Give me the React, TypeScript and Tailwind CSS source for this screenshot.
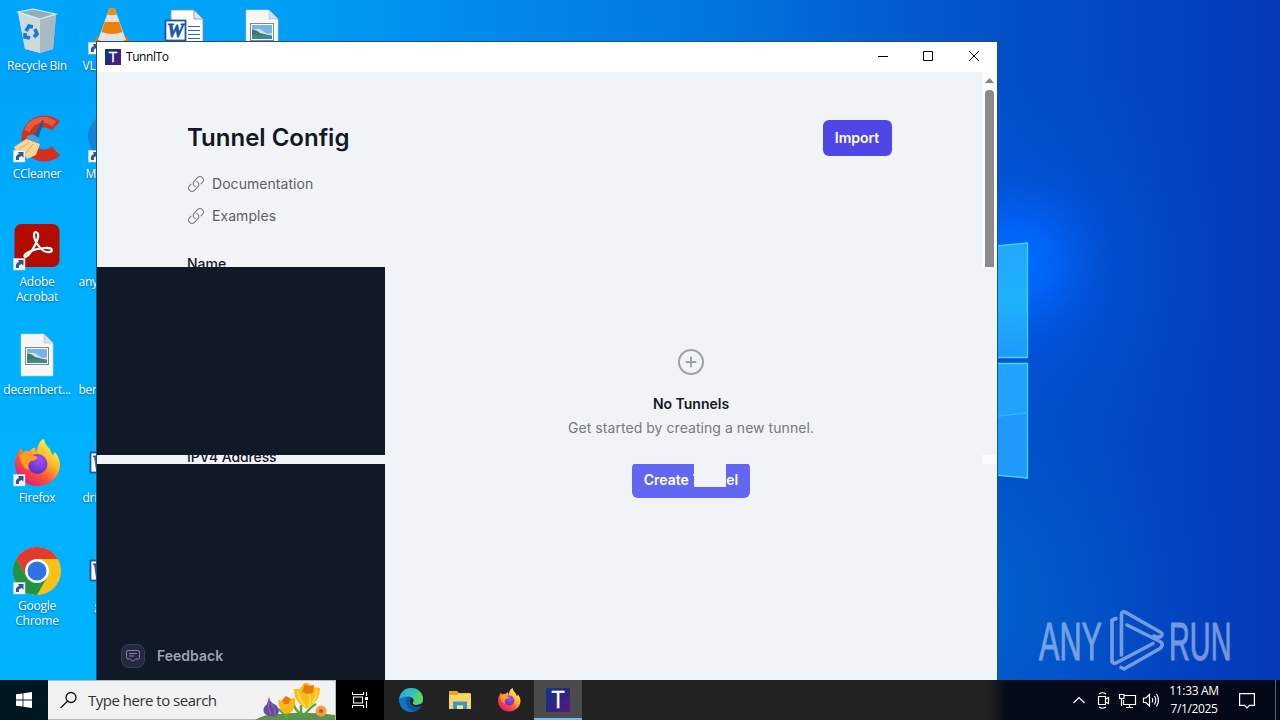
import type { ReactNode } from 'react'

const SEGOE = "font-['Open_Sans',sans-serif]"

/* ---------- desktop artwork ---------- */

function Wallpaper() {
  return (
    <svg className="absolute inset-0 h-full w-full" viewBox="0 0 1280 720" aria-hidden="true">
      <defs>
        <linearGradient id="sky" x1="0" y1="0" x2="1" y2="0">
          <stop offset="0" stopColor="#00a7fc" />
          <stop offset="0.2" stopColor="#00a2f6" />
          <stop offset="0.34" stopColor="#028eef" />
          <stop offset="0.55" stopColor="#0277e0" />
          <stop offset="0.7" stopColor="#025cd0" />
          <stop offset="0.79" stopColor="#034fc7" />
          <stop offset="0.9" stopColor="#0345c1" />
          <stop offset="1" stopColor="#033ab8" />
        </linearGradient>
        <linearGradient id="left" x1="0" y1="0" x2="0" y2="1">
          <stop offset="0" stopColor="#00a4fa" />
          <stop offset="0.4" stopColor="#00b0ff" />
          <stop offset="1" stopColor="#00b3ff" />
        </linearGradient>
        <radialGradient id="halo" gradientUnits="userSpaceOnUse" cx="1000" cy="270" r="230">
          <stop offset="0" stopColor="#005cf0" stopOpacity="0.8" />
          <stop offset="0.5" stopColor="#0054dc" stopOpacity="0.45" />
          <stop offset="1" stopColor="#004ccc" stopOpacity="0" />
        </radialGradient>
        <radialGradient id="glow" gradientUnits="userSpaceOnUse" cx="1018" cy="262" r="95">
          <stop offset="0" stopColor="#006cff" />
          <stop offset="0.35" stopColor="#0067ff" stopOpacity="0.8" />
          <stop offset="1" stopColor="#0058e4" stopOpacity="0" />
        </radialGradient>
        <radialGradient id="low" gradientUnits="userSpaceOnUse" cx="960" cy="600" r="240">
          <stop offset="0" stopColor="#0068d0" stopOpacity="0.9" />
          <stop offset="1" stopColor="#0054c8" stopOpacity="0" />
        </radialGradient>
        <linearGradient id="pane" x1="0" y1="0" x2="0" y2="1">
          <stop offset="0" stopColor="#22a6ff" />
          <stop offset="0.5" stopColor="#1fb2fc" />
          <stop offset="1" stopColor="#1e98ff" />
        </linearGradient>
      </defs>
      <rect width="1280" height="720" fill="url(#sky)" />
      <rect y="60" width="97" height="660" fill="url(#left)" />
      <rect x="700" y="340" width="520" height="380" fill="url(#low)" />
      <rect x="760" y="40" width="480" height="470" fill="url(#halo)" />
      <rect x="900" y="150" width="240" height="240" fill="url(#glow)" />
      <path d="M980 247 1028 242.500V357.500H980Z" fill="url(#pane)" />
      <path d="M980 363.500H1028V478.500L980 474Z" fill="#2199fc" />
      <path d="M980 363.500H1028V413L980 418Z" fill="#20a3fd" />
      <path d="M980 247.500 1027.500 243V357.500H980M980 363.500H1027.500V478L980 473.500" fill="none" stroke="#3fdcfb" strokeWidth="1.300" />
      <path d="M980 418 1028 413" stroke="#35bcfd" />
    </svg>
  )
}

function Watermark() {
  return (
    <svg className="absolute left-[1030px] top-[600px] h-20 w-[220px]" viewBox="0 0 220 80" opacity="0.5">
      <g fill="#e4edff" stroke="#e4edff" strokeWidth="0.900" fontFamily="'Liberation Sans', sans-serif" fontSize="53">
        <text x="9" y="59.500" textLength="63" lengthAdjust="spacingAndGlyphs">ANY</text>
        <text x="139" y="59.500" textLength="62.500" lengthAdjust="spacingAndGlyphs">RUN</text>
      </g>
      <g fill="none" stroke="#e4edff" strokeWidth="3.600" strokeLinejoin="round" strokeLinecap="round">
        <path d="M86 18.500 82 20V61.500Q83 64 86 63L123 43.500" />
        <path d="M91.500 55V14Q92 11 95 12L131 32.500Q134 36 128 37.500L124 36" />
        <path d="M97 25 131 42Q134 45 130 48.500L94 69 91 67.500" />
      </g>
    </svg>
  )
}

function Shortcut() {
  return (
    <g>
      <rect x="0.500" y="35.500" width="11.500" height="11.500" fill="#f8fafd" stroke="#c8d4e0" strokeWidth="0.600" />
      <path d="M3 45Q2 40 6 39L5 37H10.500V42.500L8.500 41Q5 42 6 45Z" fill="#2f5593" />
    </g>
  )
}

function RecycleBin() {
  return (
    <>
      <path d="m5 5 7 37 15 4 13-4 3-34Z" fill="#c3d3da" />
      <path d="m27 12 16-4-3 34-13 4Z" fill="#a8bac4" />
      <path d="m5 5 22 7v34l-15-4Z" fill="#d0d9dc" opacity="0.850" />
      <path d="m5 5 15-3 23 5-16 5Z" fill="#8fadbb" stroke="#e3eef3" strokeWidth="1.100" />
      <g fill="none" stroke="#1579cf" strokeWidth="3.600">
        <path d="m13 24 3-5 4 1" />
        <path d="m22 22 2 5-3 3" />
        <path d="m17 31-5-1 0-4" />
      </g>
    </>
  )
}

function Vlc() {
  return (
    <>
      <path d="m8 30-3 11h38l-3-11Z" fill="#e57200" />
      <path d="M21 2Q24 0 27 2L38 33Q24 38 10 33Z" fill="#e2e2e2" />
      <path d="M21 2Q24 0 27 2L29 8H19Z" fill="#f58a0c" />
      <path d="M16.700 15H31.300L34.500 25Q24 29 13.500 25Z" fill="#f07f0a" />
      <Shortcut />
    </>
  )
}

function WordDoc() {
  return (
    <>
      <path d="M8 3H31L40 12V45H8Z" fill="#fdfdfd" stroke="#8b9299" strokeWidth="0.800" />
      <path d="M31 3V12H40Z" fill="#e3e6ea" stroke="#777d84" strokeWidth="0.700" />
      <path d="M25 19.500H37M25 23.500H37M25 27.500H37M25 31.500H37" stroke="#2b69b8" strokeWidth="1.200" />
      <rect x="2.500" y="13.500" width="20" height="20" fill="#fff" stroke="#1d56a8" strokeWidth="1.800" />
      <text x="12.500" y="30" textAnchor="middle" fontFamily="'Liberation Serif', serif" fontWeight="700" fontStyle="italic" fontSize="19" fill="#1d56a8" stroke="#1d56a8" strokeWidth="0.800">W</text>
    </>
  )
}

function ImageDoc() {
  return (
    <>
      <path d="M8 3H31L40 12V45H8Z" fill="#f7f7f7" stroke="#c3c9cd" strokeWidth="0.600" />
      <path d="M31 3V12H40Z" fill="#dde0e2" stroke="#b5babd" strokeWidth="0.600" />
      <rect x="12.500" y="16.500" width="23" height="17" fill="#fff" stroke="#7c8793" />
      <rect x="14" y="18" width="20" height="14" fill="#7ab2e8" />
      <path d="M14 23Q21 20 25 24T34 26V29H14Z" fill="#c8e2f2" />
      <path d="M14 23Q18 22 22 26L34 29H14Z" fill="#3e7d61" />
      <path d="M14 28.500H34V32H14Z" fill="#43888c" />
    </>
  )
}

function CCleaner() {
  return (
    <>
      <path d="M43 11A17 17 0 1 0 43 36" fill="none" stroke="#d3301f" strokeWidth="12" />
      <path d="M41 9A17 17 0 0 0 14 16" fill="none" stroke="#ea5a40" strokeWidth="6" />
      <path d="M29 5 31 6 25 24 17 20 23 17Z" fill="#1f5f92" />
      <path d="m14 21 6-2 7 5-2 5-12-3Z" fill="#4b9bd0" />
      <path d="M1 32 13 24 27 29 23 40 14 44 10 37 4 38Z" fill="#f7d596" />
      <path d="m6 34 10-6M13 38l7-9" stroke="#dfae62" />
      <Shortcut />
    </>
  )
}

function BlueDisc() {
  return (
    <>
      <circle cx="23" cy="21" r="23" fill="#1583d8" />
      <Shortcut />
    </>
  )
}

function Acrobat() {
  return (
    <>
      <rect x="1.500" y="1" width="45" height="43" rx="7" fill="#b30b00" />
      <path d="M12 34C9 31 20 26 31 25S40 30 34 29C27 28 21 17 21 12S26 9 25 14C24 20 16 34 12 34Z" fill="none" stroke="#fff" strokeWidth="2.200" strokeLinejoin="round" />
      <Shortcut />
    </>
  )
}

function FirefoxLogo() {
  return (
    <>
      <defs>
        <linearGradient id="ff" x1="0.850" y1="0.100" x2="0.200" y2="0.950">
          <stop offset="0" stopColor="#fff44f" />
          <stop offset="0.350" stopColor="#ffb52a" />
          <stop offset="0.650" stopColor="#ff5038" />
          <stop offset="1" stopColor="#e8157a" />
        </linearGradient>
        <radialGradient id="ffcore" cx="0.600" cy="0.300" r="0.700">
          <stop offset="0" stopColor="#a64dfa" />
          <stop offset="1" stopColor="#5b34c4" />
        </radialGradient>
      </defs>
      <path d="M8 9 10 13Q13 11 17 12 20 8 22 9L23 14 25 7Q27 1 31 0 32 6 37 10 38 14 40 16L42 13Q47 19 47 26A22.500 21.500 0 0 1 2 25Q2 18 5 14Z" fill="url(#ff)" />
      <circle cx="24.500" cy="25" r="10" fill="url(#ffcore)" />
      <path d="M6 16Q15 10 19 16L25 18Q23 22 18 22 13 26 17 31 10 30 8 23Z" fill="#ff9a22" />
    </>
  )
}

function ChromeLogo() {
  return (
    <>
      <circle cx="24" cy="24" r="24" fill="#fbc116" />
      <path d="M24 12H44.800A24 24 0 0 0 3.200 12L13.600 30Z" fill="#e33b2e" />
      <path d="M3.200 12A24 24 0 0 0 24 48L34.400 30 24 24 13.600 30Z" fill="#229342" />
      <circle cx="24" cy="24" r="12" fill="#fff" />
      <circle cx="24" cy="24" r="9.500" fill="#2f74e5" />
    </>
  )
}

/* ---------- desktop icons ---------- */

type Shown = { x: number; y: number; label?: string[]; art: ReactNode; cut?: number }

// cut = left edge of a label that runs under the window
const ICONS: Shown[] = [
  { x: 0, y: 0, label: ['Recycle Bin'], art: <RecycleBin /> },
  { x: 0, y: 1, label: ['CCleaner'], art: <CCleaner /> },
  { x: 0, y: 2, label: ['Adobe', 'Acrobat'], art: <Acrobat /> },
  { x: 0, y: 3, label: ['decembert...'], art: <ImageDoc /> },
  { x: 0, y: 4, label: ['Firefox'], art: <><FirefoxLogo /><Shortcut /></> },
  { x: 0, y: 5, label: ['Google', 'Chrome'], art: <><ChromeLogo /><Shortcut /></> },
  { x: 1, y: 0, label: ['VL'], art: <Vlc />, cut: 8 },
  { x: 1, y: 1, label: ['M'], art: <BlueDisc />, cut: 11 },
  { x: 1, y: 2, label: ['any'], art: null, cut: 4 },
  { x: 1, y: 3, label: ['ber'], art: null, cut: 4 },
  { x: 1, y: 4, label: ['dri'], art: <WordDoc />, cut: 8 },
  { x: 1, y: 5, label: ['g'], art: <WordDoc />, cut: 20 },
  { x: 2, y: 0, art: <WordDoc /> },
  { x: 3, y: 0, art: <ImageDoc /> },
]

function DesktopIcon({ icon }: { icon: Shown }) {
  return (
    <div className="absolute w-[75px] pt-[7px]" style={{ left: icon.x * 75 - 0.5, top: icon.y * 108 }}>
      <svg className="mx-auto block h-12 w-12" viewBox="0 0 48 48" aria-hidden="true">{icon.art}</svg>
      <div
        className={`mt-[3px] text-[12px] leading-[15px] tracking-[-0.25px] whitespace-nowrap text-white [text-shadow:0_1px_2px_rgba(0,40,90,0.6)]
          ${icon.cut === undefined ? 'text-center' : ''}`}
        style={{ paddingLeft: icon.cut ?? 0 }}>
        {icon.label?.map(line => <div key={line}>{line}</div>)}
      </div>
    </div>
  )
}

/* ---------- TunnlTo window ---------- */

function TunnlToLogo({ className }: { className: string }) {
  return (
    <svg className={className} viewBox="0 0 24 24" aria-hidden="true">
      <defs>
        <linearGradient id="tt" x1="0" y1="0" x2="1" y2="1">
          <stop offset="0" stopColor="#0d3a84" />
          <stop offset="0.500" stopColor="#2b2580" />
          <stop offset="1" stopColor="#5b1585" />
        </linearGradient>
      </defs>
      <rect width="24" height="24" fill="url(#tt)" />
      <text x="12" y="20" textAnchor="middle" fontFamily="'Open Sans', sans-serif" fontSize="23" fill="#fff" stroke="#fff" strokeWidth="0.400">T</text>
    </svg>
  )
}

function TitleBar() {
  return (
    <div className="flex h-[30px] shrink-0 items-center bg-white pb-px pl-2">
      <TunnlToLogo className="h-4 w-4" />
      <span className={`ml-[5px] pt-px text-[12px] tracking-[-0.45px] text-black ${SEGOE}`}>TunnlTo</span>
      <div className="ml-auto flex">
        {['M0 5.500H10', 'M0.500 0.500H9.500V9.500H0.500Z', 'M0 0 10 10M10 0 0 10'].map(d => (
          <div key={d} className="flex w-[45.500px] justify-center">
            <svg className="h-[11px] w-[11px]" viewBox="0 0 11 11" fill="none" stroke="#000"><path d={d} /></svg>
          </div>
        ))}
      </div>
    </div>
  )
}

function DocLink({ children }: { children: ReactNode }) {
  return (
    <div className="flex h-5 items-center text-sm tracking-[0.05px] text-[#5b6168]">
      <svg className="-ml-px mr-[7px] h-[18px] w-[18px] text-[#74797f]" viewBox="0 0 24 24" fill="none" stroke="currentColor"
        strokeWidth="1.400" strokeLinecap="round" strokeLinejoin="round">
        <path d="M13.190 8.688a4.500 4.500 0 0 1 1.242 7.244l-4.500 4.500a4.500 4.500 0 0 1-6.364-6.364l1.757-1.757m13.350-.622 1.757-1.757a4.500 4.500 0 0 0-6.364-6.364l-4.500 4.500a4.500 4.500 0 0 0 1.242 7.244" />
      </svg>
      {children}
    </div>
  )
}

function ConfigPane() {
  return (
    <div className="flex h-[195px] shrink-0 overflow-hidden">
      <div className="flex-1 pt-12 pr-[90px] pl-[91px]">
        <div className="flex h-9 items-center justify-between">
          <h1 className="-ml-px text-2xl font-semibold text-[#111827]">Tunnel Config</h1>
          <button className="h-9 w-[69px] rounded-md bg-[#4f46e5] pr-px text-sm font-semibold text-white">Import</button>
        </div>
        <div className="mt-[18px] flex flex-col gap-3">
          <DocLink>Documentation</DocLink>
          <DocLink>Examples</DocLink>
        </div>
        <div className="mt-7 -ml-px text-sm leading-5 font-medium text-[#111827]">Name</div>
      </div>
      <div className="flex w-[15px] flex-col items-center bg-[#fcfcfc] pt-[6px]">
        <svg className="h-[5px] w-[9px]" viewBox="0 0 9 5"><path d="M0 5 4.500 0 9 5Z" fill="#858585" /></svg>
        <div className="mt-[7px] w-[9px] flex-1 rounded-t-[4px] bg-[#8a8a8a]" />
      </div>
    </div>
  )
}

function AppWindow() {
  return (
    <div className="absolute top-[41px] left-24 flex h-[639px] w-[902px] flex-col border-t border-r border-l border-[#1b5180] bg-[#f1f4f6] font-['Inter',sans-serif]">
      <TitleBar />
      <ConfigPane />

      <div className="flex h-[188px] shrink-0">
        <div className="w-72 bg-[#111827]" />
        <div className="flex flex-1 flex-col items-center pt-[82px]">
          <svg className="h-[26px] w-[26px]" viewBox="0 0 26 26" fill="none" stroke="#9ca1a8" strokeWidth="2" strokeLinecap="round">
            <circle cx="13" cy="13" r="12" />
            <path d="M8.500 13h9M13 8.500v9" />
          </svg>
          <h3 className="mt-[19px] text-sm leading-5 font-semibold text-[#111827]">No Tunnels</h3>
          <p className="mt-1 text-sm leading-5 tracking-[0.05px] text-[#737980]">Get started by creating a new tunnel.</p>
        </div>
      </div>

      {/* strip of the config form still showing between the two dark blocks */}
      <div className="flex h-[9px] shrink-0 overflow-hidden">
        <div className="-mt-2 flex-1 pl-[90px] text-sm leading-5 font-medium tracking-[-0.1px] text-[#111827]">IPV4 Address</div>
        <div className="w-[15px] bg-[#fcfcfc]" />
      </div>

      <div className="flex flex-1 overflow-hidden">
        <div className="flex w-72 items-end bg-[#111827] pb-3 pl-6">
          <div className="flex items-center gap-3">
            <span className="flex h-6 w-6 items-center justify-center rounded-lg border border-[#3a4056] bg-[#232a3b]">
              <svg className="h-4 w-4" viewBox="0 0 16 16" fill="none" stroke="#9277bd" strokeLinejoin="round" strokeLinecap="round">
                <path d="M3 2.500H13Q14.500 2.500 14.500 4V9.500Q14.500 11 13 11H10.500L8 13.500 5.500 11H3Q1.500 11 1.500 9.500V4Q1.500 2.500 3 2.500ZM4.500 5.500H11.500M4.500 8H8.500" />
              </svg>
            </span>
            <span className="text-sm font-semibold text-[#9ca3af]">Feedback</span>
          </div>
        </div>
        <div className="flex flex-1 items-start justify-center">
          <div className="relative -mt-[2px]">
            <button className="h-9 w-[118px] rounded-md bg-[#6366f1] text-sm font-semibold whitespace-nowrap text-white">Create Tunnel</button>
            <div className="absolute top-0 left-[62px] h-[25px] w-8 bg-[#f1f4f6]" />
          </div>
        </div>
      </div>
    </div>
  )
}

/* ---------- taskbar ---------- */

function Flowers() {
  return (
    <svg className="ml-auto h-10 w-20" viewBox="0 0 80 40" aria-hidden="true">
      <path d="M0 40Q10 33 28 34 48 31 80 35V40Z" fill="#5d9150" />
      <path d="M46 34V25M31 39Q30 33 23 29M31 38Q32 32 37 30M47 35Q40 30 39 25M49 36Q54 28 61 24" fill="none" stroke="#52a63e" strokeWidth="2.400" />
      <path d="M14 17Q15 23 21 25 26 31 22 35 15 38 10 34 6 29 12 24Z" fill="#6a4a9c" />
      <path d="M14 19Q12 28 16 35M16 23Q21 28 20 35" fill="none" stroke="#8c6cbb" />
      <path d="M23 20 28 21 31 16 35 19 40 18Q41 29 35 33L30 34Q24 30 23 20Z" fill="#fab818" />
      <path d="m27 20 4-4 5 3-3 5h-4Z" fill="#e9790d" />
      <path d="M39 9 45 9 49 3 53 3 58 7 65 8Q65 19 58 24L51 29 44 23Q39 18 39 9Z" fill="#fbbd18" />
      <path d="M47 12 50 4 54 6 59 5 58 13 52 14Z" fill="#e9780e" />
      <path d="M43 11Q44 20 51 27M53 14Q57 17 54 26M61 10Q62 18 57 23" fill="none" stroke="#ffe05a" strokeWidth="1.500" />
      <circle cx="66" cy="31" r="5.500" fill="#f2a23c" />
      <circle cx="66" cy="31" r="2" fill="#b9591c" />
    </svg>
  )
}

function EdgeLogo() {
  return (
    <svg className="h-6 w-6" viewBox="0 0 24 24">
      <defs>
        <linearGradient id="edgetop" x1="0" y1="0" x2="1" y2="0.400">
          <stop offset="0" stopColor="#2aa4e4" />
          <stop offset="0.600" stopColor="#32c4b4" />
          <stop offset="1" stopColor="#65d653" />
        </linearGradient>
      </defs>
      <circle cx="12" cy="12" r="12" fill="#1273c6" />
      <path d="M0.300 11C1.500 3 7 0 12 0 19 0 24 5 24 10.500 24 15 20.500 17 17 17 14 17 13 16 14 14.500 15.500 12 13 8.500 9 8.500 5 8.500 1 10 0.300 11Z" fill="url(#edgetop)" />
      <path d="M9 9C5 12 7 22 15 23.500 18 23 21 21 22.500 18 17 20.500 11 18 11 13.500 11 11 12 10 12.500 9.500 11.500 8.500 10 8.500 9 9Z" fill="#15539e" />
      <path d="M14 14.500C13 16 14 17 17 17 20 17 22.500 16 24 14.500L22.500 18C17 20.500 11 18 11 13.500 11 11 12 10 12.500 9.500Q15.500 11 14 14.500Z" fill="#222" />
    </svg>
  )
}

function ExplorerLogo() {
  return (
    <svg className="h-[22px] w-[22px]" viewBox="0 0 22 22">
      <path d="M0 2H8L10 4H21V8H0Z" fill="#e8a51c" />
      <path d="M0 6H8L10 4.500H22V20H0Z" fill="#fbd667" />
      <path d="M4 20V12.500H18V20H14V16.500H8V20Z" fill="#3a96d6" />
      <path d="M8 20V16.500H14V20Z" fill="#fbe08a" />
    </svg>
  )
}

function Tray() {
  return (
    <div className="ml-auto flex h-full items-center text-white">
      <svg className="h-5 w-[90px]" viewBox="0 0 90 20" fill="none" stroke="currentColor" strokeWidth="1.200">
        <path d="m4.500 13 5.500-5.500 5.500 5.500" />
        <path d="M29.500 6.500H36.500V14.500H29.500ZM36.500 9 39.500 7.500V13.500L36.500 12M30 4Q33.500 1.500 37 4M30 17Q33.500 19.500 37 17" />
        <path d="M55.500 5.500H66.500V14.500H54.500V10M60.500 14.500V17M57 17.500H64M50.500 4.500H55V8.500H50.500ZM52.500 8.500V16" />
        <path d="M74.500 8H77L80.500 4.500V16L77 12.500H74.500ZM83 8Q84.500 10 83 12.500M85.500 6Q88 10 85.500 14.500M87.500 4Q91.500 10 87.500 16.500" />
      </svg>
      <div className="ml-px w-[68px] text-center text-[12px] leading-[18px] tracking-[-0.35px]">
        <div>11:33 AM</div>
        <div>7/1/2025</div>
      </div>
      <svg className="ml-[11px] h-[18px] w-4" viewBox="0 0 16 18" fill="none" stroke="currentColor" strokeWidth="1.200">
        <path d="M0.600 2.600H15.400V14.400H10.500L8 17 5.500 14.400H0.600Z" />
      </svg>
      <div className="ml-5 h-full w-[5px] border-l border-[#5b626e]" />
    </div>
  )
}

function Taskbar() {
  return (
    <div className="absolute inset-x-0 bottom-0 flex h-10 bg-[linear-gradient(90deg,#222_0,#222_990px,#050b18_1006px,#020817_1280px)]">
      <div className="flex w-12 items-center justify-center bg-[#00171f]">
        <svg className="h-4 w-4" viewBox="0 0 16 16" fill="#fff"><path d="M0 2.300 6.600 1.400V7.600H0ZM7.400 1.300 16 0V7.600H7.400ZM0 8.400H6.600V14.600L0 13.700ZM7.400 8.400H16V16L7.400 14.700Z" /></svg>
      </div>
      <div className="flex w-72 items-center border-y border-r border-[#b9b9b9] bg-[#f2f2f2] pl-3">
        <svg className="h-[18px] w-[18px]" viewBox="0 0 18 18" fill="none" stroke="#111" strokeWidth="1.300">
          <circle cx="11" cy="6.500" r="5" />
          <path d="m7.500 10.300-7 6.700" />
        </svg>
        <span className="ml-[10px] text-[15px] tracking-[-0.5px] whitespace-nowrap text-[#333]">Type here to search</span>
        <Flowers />
      </div>
      <div className="flex w-12 items-center justify-center bg-black">
        <svg className="h-4 w-4" viewBox="0 0 16 16" fill="none" stroke="#fff" strokeWidth="1.100">
          <path d="M0.500 0V2.500H11.500V0M0.500 16V13.500H11.500V16M1.500 5H10.500V11H1.500ZM14.500 0V4M14.500 9V16" />
          <path d="M13 5H16V8H13Z" fill="#fff" stroke="none" />
        </svg>
      </div>
      <div className="ml-[3px] flex gap-px">
        <div className="flex w-12 items-center justify-center"><EdgeLogo /></div>
        <div className="flex w-12 items-center justify-center"><ExplorerLogo /></div>
        <div className="flex w-12 items-center justify-center">
          <svg className="h-6 w-6" viewBox="0 0 48 48"><FirefoxLogo /></svg>
        </div>
        <div className="flex w-12 items-center justify-center border-b-2 border-[#76b9ed] bg-[#4b4b4b] pt-[2px]">
          <TunnlToLogo className="h-6 w-6" />
        </div>
      </div>
      <Tray />
    </div>
  )
}

export default function App() {
  return (
    <div className={`relative h-[720px] w-[1280px] overflow-hidden ${SEGOE}`}>
      <Wallpaper />
      {ICONS.map(icon => <DesktopIcon key={`${icon.x}-${icon.y}`} icon={icon} />)}
      <Watermark />
      <AppWindow />
      <Taskbar />
    </div>
  )
}
